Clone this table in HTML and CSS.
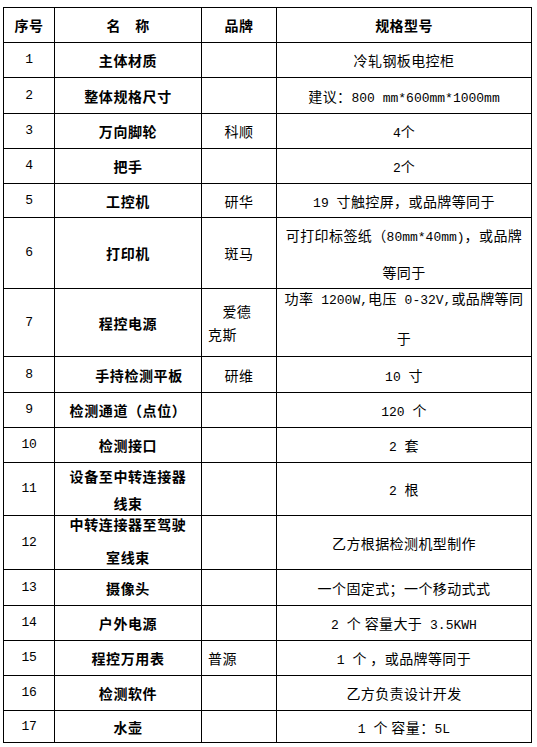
FILE: index.html
```html
<!DOCTYPE html>
<html lang="zh-CN">
<head>
<meta charset="utf-8">
<title>规格表</title>
<link rel="stylesheet" href="styles.css">
</head>
<body>
<table class="spec">
  <colgroup>
    <col class="c-no">
    <col class="c-name">
    <col class="c-brand">
    <col class="c-spec">
  </colgroup>
  <tr class="h35 head">
    <th>序号</th><th>名　称</th><th>品牌</th><th>规格型号</th>
  </tr>
  <tr class="h35"><td class="no">1</td><td class="name">主体材质</td><td></td><td>冷轧钢板电控柜</td></tr>
  <tr class="h36"><td class="no">2</td><td class="name">整体规格尺寸</td><td></td><td>建议：<span class="lat">800 mm*600mm*1000mm</span></td></tr>
  <tr class="h35"><td class="no">3</td><td class="name">万向脚轮</td><td>科顺</td><td><span class="lat">4</span>个</td></tr>
  <tr class="h35"><td class="no">4</td><td class="name">把手</td><td></td><td><span class="lat">2</span>个</td></tr>
  <tr class="h34"><td class="no">5</td><td class="name">工控机</td><td>研华</td><td><span class="lat">19 </span>寸触控屏，或品牌等同于</td></tr>
  <tr class="h71"><td class="no">6</td><td class="name">打印机</td><td>斑马</td><td><div class="ln">可打印标签纸（<span class="lat">80mm*40mm)</span>，或品牌</div><div class="ln g21">等同于</div></td></tr>
  <tr class="h68"><td class="no">7</td><td class="name">程控电源</td><td class="left"><div class="ln">　爱德</div><div class="ln g7">克斯</div></td><td class="up"><div class="ln">功率<span class="lat"> 1200W,</span>电压<span class="lat"> 0-32V,</span>或品牌等同</div><div class="ln g24">于</div></td></tr>
  <tr class="h36"><td class="no">8</td><td class="name shift">手持检测平板</td><td>研维</td><td><span class="lat">10 </span>寸</td></tr>
  <tr class="h35"><td class="no">9</td><td class="name">检测通道（点位）</td><td></td><td><span class="lat">120 </span>个</td></tr>
  <tr class="h35"><td class="no">10</td><td class="name">检测接口</td><td></td><td><span class="lat">2 </span>套</td></tr>
  <tr class="h53"><td class="no">11</td><td class="name"><div class="ln">设备至中转连接器</div><div class="ln g11">线束</div></td><td></td><td><span class="lat">2 </span>根</td></tr>
  <tr class="h53"><td class="no">12</td><td class="name up4"><div class="ln">中转连接器至驾驶</div><div class="ln g17">室线束</div></td><td></td><td>乙方根据检测机型制作</td></tr>
  <tr class="h36"><td class="no">13</td><td class="name">摄像头</td><td></td><td>一个固定式；一个移动式式</td></tr>
  <tr class="h35"><td class="no">14</td><td class="name">户外电源</td><td></td><td><span class="lat">2 </span>个 容量大于<span class="lat"> 3.5KWH</span></td></tr>
  <tr class="h35"><td class="no">15</td><td class="name">程控万用表</td><td class="left">普源</td><td><span class="lat">1 </span>个 ，或品牌等同于</td></tr>
  <tr class="h35"><td class="no">16</td><td class="name">检测软件</td><td></td><td>乙方负责设计开发</td></tr>
  <tr class="h32"><td class="no">17</td><td class="name">水壶</td><td></td><td><span class="lat">1 </span>个 容量：<span class="lat">5L</span></td></tr>
</table>
</body>
</html>
```
FILE: styles.css
```css
html, body {
  margin: 0;
  padding: 0;
  background: #ffffff;
}
body {
  padding: 7px 0 0 3px;
  font-family: "Noto Sans CJK SC", sans-serif;
  font-size: 14px;
  color: #000000;
}
.spec {
  border-collapse: collapse;
  table-layout: fixed;
  width: 528px;
}
.c-no { width: 51px; }
.c-name { width: 147px; }
.c-brand { width: 75px; }
.c-spec { width: 255px; }
.spec th, .spec td {
  border: 1px solid #000000;
  padding: 0 6px;
  text-align: center;
  vertical-align: middle;
  white-space: nowrap;
  line-height: 16px;
  font-weight: normal;
  letter-spacing: 0.4px;
}
.spec th {
  font-weight: 700;
}
.spec td.name {
  font-weight: 700;
  letter-spacing: 0.6px;
}
.spec td.no {
  font-family: "Liberation Mono", monospace;
  font-size: 13px;
  letter-spacing: -0.4px;
}
.lat {
  font-family: "Liberation Mono", monospace;
  font-size: 13px;
  letter-spacing: 0;
  line-height: 0;
}
.ln {
  height: 16px;
  line-height: 16px;
}
.g7 { margin-top: 7px; }
.g11 { margin-top: 11px; }
.g17 { margin-top: 17px; }
.g21 { margin-top: 21px; }
.g24 { margin-top: 24px; }
.spec td.left { text-align: left; padding-left: 6px; }
.spec td.shift { padding-left: 28px; }
.spec td.up { padding-bottom: 10px; }
.spec td.up4 { padding-bottom: 4px; }
.h32 { height: 32px; }
.h34 { height: 34px; }
.h35 { height: 35px; }
.h36 { height: 36px; }
.h53 { height: 53px; }
.h68 { height: 68px; }
.h71 { height: 71px; }
```
